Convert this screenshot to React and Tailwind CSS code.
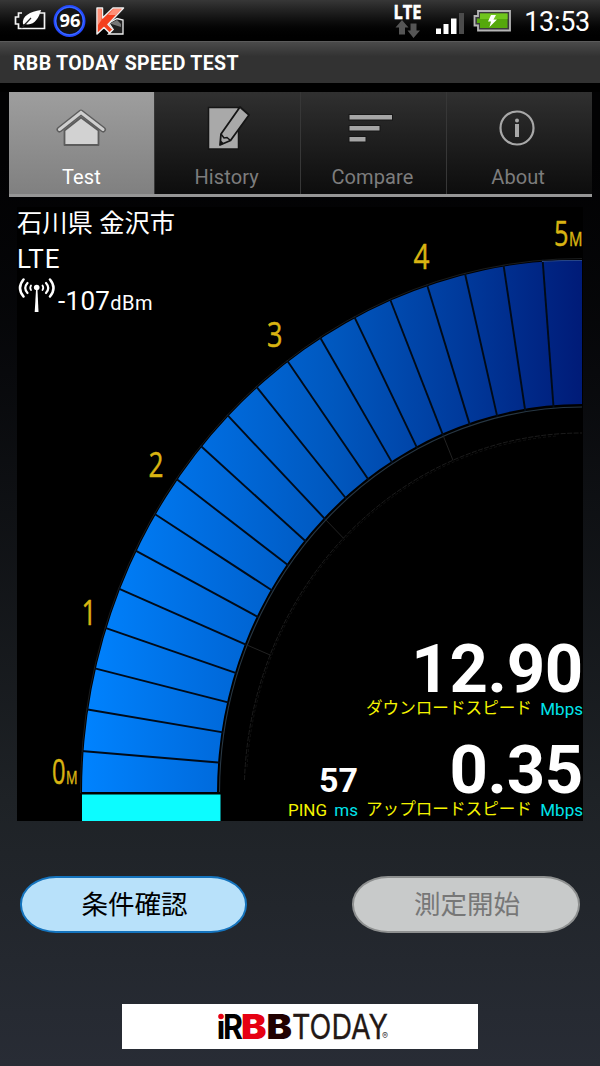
import React from "react";

const tabs = [
  { label: "Test", icon: HomeIcon, active: true },
  { label: "History", icon: HistoryIcon },
  { label: "Compare", icon: CompareIcon },
  { label: "About", icon: AboutIcon },
];

function HomeIcon() {
  return (
    <svg className="h-12 w-14" viewBox="0 0 56 48">
      <path d="M11.500 42V27.500L28 14.500L45.500 27.500V42Z" fill="#d2d2d2" stroke="#5c5c5c" strokeWidth="1.800" strokeLinejoin="round" />
      <path d="M6.500 26.500L28 9.500L50 26.500" fill="none" stroke="#5c5c5c" strokeWidth="6" strokeLinecap="round" strokeLinejoin="round" />
      <path d="M6.500 26.500L28 9.500L50 26.500" fill="none" stroke="#cfcfcf" strokeWidth="3" strokeLinecap="round" />
    </svg>
  );
}

function HistoryIcon() {
  return (
    <svg className="h-12 w-14" viewBox="0 0 56 48">
      <path d="M9.500 4.500H39.500V46H9.500Z" fill="#a9a9a9" stroke="#151515" strokeWidth="1.500" />
      <path d="M41 4L50 12L31.500 37.500L21 42L22 31Z" fill="#a9a9a9" stroke="#151515" strokeWidth="1.800" strokeLinejoin="round" />
      <path d="M22 31L25 35L28 34.500L31.500 37.500" fill="none" stroke="#151515" strokeWidth="1.500" />
      <path d="M21 42L22 37.500L25 40.500Z" fill="#151515" />
    </svg>
  );
}

function CompareIcon() {
  return (
    <svg className="h-12 w-14" viewBox="0 0 56 48">
      <g fill="#a5a5a5" stroke="#171717" strokeWidth="1">
        <rect x="5" y="11.500" width="43.500" height="5.500" />
        <rect x="5" y="22.500" width="31" height="5.500" />
        <rect x="5" y="33.500" width="17" height="5.500" />
      </g>
    </svg>
  );
}

function AboutIcon() {
  return (
    <svg className="h-12 w-14" viewBox="0 0 56 48">
      <circle cx="27" cy="25" r="16.500" fill="none" stroke="#a8a8a8" strokeWidth="2.200" />
      <circle cx="27" cy="17.500" r="2" fill="#a8a8a8" />
      <rect x="25" y="21" width="4" height="13" fill="#a8a8a8" />
    </svg>
  );
}

function StatusBar() {
  return (
    <header className="flex h-[41px] items-center bg-linear-to-b from-[#373737] to-black pr-[10px] pl-[13px] text-white">
      <svg className="h-[41px] w-[120px]" viewBox="13 0 120 41">
        <path d="M22 13H18.500V17H15.500V24H18.500V28.500H44.500V13H40" fill="none" stroke="#f4f4f4" strokeWidth="1.700" />
        <path d="M23 24.500C21.500 16 30 11.500 41 10C39 18 34 26.500 24.500 24Z" fill="#fff" />
        <path d="M21.500 28L31 18" stroke="#222" strokeWidth="1.200" />
        <circle cx="69.500" cy="21" r="14.500" fill="#151515" stroke="#2448ff" strokeWidth="3" />
        <circle cx="69.500" cy="21" r="14" fill="none" stroke="#3f74ff" strokeWidth="1" />
        <text x="59.500" y="27" textLength="21" lengthAdjust="spacingAndGlyphs" fill="#fff" fontSize="17.500" fontWeight="700" fontFamily="Noto Sans">96</text>
        <path d="M109 23L117 18.500L123 20V34H108.500L113 29.500Z" fill="#1f1f1f" stroke="#eee" strokeWidth="1.300" />
        <path d="M110 23.500L117 20L121 24V27Z" fill="#777" />
        <path d="M97 8H102.500V18L113 8H123.500L108 24.500L113 29.500L109.500 33L104 27.500L97 34Z" fill="#f4401e" stroke="#eee" strokeWidth="1.500" strokeLinejoin="round" />
        <path d="M98 9H101.500V20L98 25ZM113.500 9H121.500L116 15H108Z" fill="#ff9078" />
      </svg>
      <svg className="ml-auto h-[41px] w-[124px]" viewBox="390 0 124 41">
        <text x="393.500" y="18.500" textLength="28" lengthAdjust="spacingAndGlyphs" fill="#fff" stroke="#fff" strokeWidth="0.500" fontSize="19" fontWeight="700" fontFamily="Open Sans">LTE</text>
        <path d="M402 20L408.500 27.500H405V34.500H399V27.500H395.500Z" fill="#555" />
        <path d="M413.500 38L407.500 30.500H410.500V23.500H416.500V30.500H420Z" fill="#555" />
        <g fill="#fff">
          <rect x="436" y="28.500" width="5" height="5.500" />
          <rect x="443.500" y="24" width="5" height="10" />
          <rect x="451" y="18.500" width="5.500" height="15.500" />
          <rect x="459" y="13" width="5" height="21" fill="#4b4b4b" />
        </g>
        <path d="M478 11H510V30.500H478V25.500H474.500V16H478Z" fill="#3b3b3b" stroke="#b5b5b5" strokeWidth="1.800" />
        <path d="M480 13.500H507.500V28H480V23H477V18.500H480Z" fill="#55a80b" />
        <path d="M480 13.500H507.500V19H480Z" fill="#70c51d" />
        <path d="M491 15H496L493.500 19.500H497L489.500 27L491 21.500H488Z" fill="#fff" />
      </svg>
      <span className="ml-[10px] w-[66px] pt-[3px] text-right text-[27px] leading-[41px] tracking-[-0.3px] whitespace-nowrap">13:53</span>
    </header>
  );
}

// quarter ellipse, angles counted from the left end
const CX = 565;
const CY = 586;
function point(rx, ry, deg) {
  const a = (deg * Math.PI) / 180;
  return [CX - rx * Math.cos(a), CY - ry * Math.sin(a)];
}

function Gauge() {
  const dividers = Array.from({ length: 19 }, (_, i) => (i + 1) * 4.5);
  return (
    <svg className="col-start-1 row-start-1 h-[614px] w-[566px]" viewBox="0 0 566 614">
      <defs>
        <linearGradient id="ring" gradientUnits="userSpaceOnUse" x1="65" y1="0" x2="565" y2="0">
          <stop offset="0" stopColor="#0083ff" />
          <stop offset="0.270" stopColor="#006bdd" />
          <stop offset="0.500" stopColor="#0058bf" />
          <stop offset="0.750" stopColor="#003b9d" />
          <stop offset="1" stopColor="#001b78" />
        </linearGradient>
      </defs>
      <path d="M65 586A500 533 0 0 1 565 53V197A365 389 0 0 0 200 586Z" fill="url(#ring)" />
      {dividers.map((deg) => {
        const [x1, y1] = point(502, 535, deg);
        const [x2, y2] = point(362, 386, deg);
        return <line key={deg} x1={x1} y1={y1} x2={x2} y2={y2} stroke="#000b18" strokeWidth="1.900" />;
      })}
      <g fill="none">
        <path d="M63.500 586A501.500 534.500 0 0 1 565 51.500" stroke="#25282a" strokeWidth="0.700" />
        <path d="M525 54.500A500 533 0 0 1 565 53.500" stroke="#28478a" strokeWidth="1" />
        <path d="M202.500 586A362.500 386 0 0 1 565 200" stroke="#273744" strokeWidth="1.100" />
        <path d="M227.500 573A337.500 360 0 0 1 565 226" stroke="#232323" strokeWidth="0.800" strokeDasharray="5 1.500" />
        <path d="M230 560A335 357 0 0 1 540 229" stroke="#181818" strokeWidth="0.700" strokeDasharray="3 2" />
        {[22.5, 45, 67.5].map((deg) => {
          const [x1, y1] = point(362, 386, deg);
          const [x2, y2] = point(337, 360, deg);
          return <line key={deg} x1={x1} y1={y1} x2={x2} y2={y2} stroke="#222" strokeWidth="1" />;
        })}
      </g>
      <rect x="65" y="585" width="138" height="2.500" fill="#000" />
      <rect x="65" y="587.500" width="138.500" height="26.500" fill="#0cfcff" />
      <g fill="#d9b412" stroke="#d9b412" strokeWidth="0.500" fontFamily="Open Sans" fontSize="35">
        <text x="35" y="576.500" textLength="13.500" lengthAdjust="spacingAndGlyphs">0</text>
        <text x="49" y="576.500" fontSize="19" textLength="11.500" lengthAdjust="spacingAndGlyphs">M</text>
        <text x="64.500" y="418" textLength="15" lengthAdjust="spacingAndGlyphs">1</text>
        <text x="131.500" y="269.500" textLength="15" lengthAdjust="spacingAndGlyphs">2</text>
        <text x="250" y="140" textLength="15.500" lengthAdjust="spacingAndGlyphs">3</text>
        <text x="396.500" y="61.500" textLength="16" lengthAdjust="spacingAndGlyphs">4</text>
        <text x="537" y="39" textLength="14.500" lengthAdjust="spacingAndGlyphs">5</text>
        <text x="552" y="39" fontSize="20" textLength="13.500" lengthAdjust="spacingAndGlyphs">M</text>
      </g>
    </svg>
  );
}

function Antenna() {
  return (
    <svg className="h-9 w-[41px]" viewBox="0 0 41 36" fill="none" stroke="#fff" strokeLinecap="round">
      <path d="M19 13L17.700 35H21.500L20.500 13Z" fill="#fff" stroke="none" />
      <circle cx="19.700" cy="10.500" r="2.800" fill="#fff" stroke="none" />
      <path d="M6.500 2.500Q-0.500 11 6.500 19.500M33 2.500Q40 11 33 19.500" strokeWidth="2.500" />
      <path d="M10.500 6Q6 11 10.500 16M29 6Q33.500 11 29 16" strokeWidth="2.200" />
      <path d="M14 8.500Q12.500 11 14 13M25.500 8.500Q27 11 25.500 13" strokeWidth="1.800" />
    </svg>
  );
}

function Speed({ value, label }) {
  return (
    <div className="flex w-[217px] flex-col items-end">
      <span className="h-[67px] text-[67px] leading-[78px] font-bold tracking-[-0.3px] text-white">{value}</span>
      <div className="flex w-full items-center justify-between leading-6 whitespace-nowrap">
        <span className="text-[16.6px] text-[#f4f400]">{label}</span>
        <span className="text-[17px] text-[#00e4ea]">Mbps</span>
      </div>
    </div>
  );
}

function Logo() {
  return (
    <svg className="h-[45px] w-[355px]" viewBox="0 0 355 45" fontFamily="Inter">
      <text x="95.500" y="35" fontSize="33" fontWeight="900" textLength="7" lengthAdjust="spacingAndGlyphs" fill="#000">ı</text>
      <text x="101" y="35" fontSize="33.500" fontWeight="700" textLength="20" lengthAdjust="spacingAndGlyphs" fill="#000">R</text>
      <circle cx="99" cy="12.500" r="2.800" fill="#e60012" />
      <text x="119" y="35" fontSize="33.500" fontWeight="900" textLength="25.500" lengthAdjust="spacingAndGlyphs" fill="#e60012">B</text>
      <text x="144.500" y="35" fontSize="33.500" fontWeight="900" textLength="25.500" lengthAdjust="spacingAndGlyphs" fill="#210000">B</text>
      <text x="170" y="35" fontSize="33.500" fontWeight="400" textLength="96" lengthAdjust="spacingAndGlyphs" fill="#231815" stroke="#231815" strokeWidth="0.300">TODAY</text>
      <text x="260" y="34.500" fontSize="9" fill="#444">®</text>
    </svg>
  );
}

export default function App() {
  return (
    <div className="flex h-[1066px] w-[600px] flex-col overflow-hidden bg-linear-to-b from-[#020203] from-15% via-[#1e2226] via-75% to-[#282c35] font-['Roboto','Noto_Sans_CJK_JP',sans-serif]">
      <StatusBar />
      <div className="flex h-[42px] items-center border-t border-[#5b5b5b] bg-linear-to-b from-[#4b4b4b] to-[#323232] to-35% pt-[3px] pl-[13px] text-[19.5px] font-bold tracking-[0.35px] text-white">
        RBB TODAY SPEED TEST
      </div>

      <div className="h-[9px] bg-black" />
      <nav className="mr-[8.500px] ml-[8.500px] grid h-[105px] grid-cols-4 border-b-3 border-[#969696]">
        {tabs.map(({ label, icon: Icon, active }) => (
          <div
            key={label}
            className={
              active
                ? "flex flex-col items-center bg-linear-to-b from-[#9e9e9e] to-[#808080] pt-[11px] text-white"
                : "flex flex-col items-center border-l border-[#373737] bg-linear-to-b from-[#303030] to-[#0d0d0d] pt-[11px] pr-[2px] text-[#7d7d7d]"
            }
          >
            <Icon />
            <span className="mt-[14px] text-[20px] leading-6 tracking-[0.1px]">{label}</span>
          </div>
        ))}
      </nav>

      <main className="mt-[10px] ml-[17px] grid h-[614px] w-[566px] shrink-0 bg-black">
        <Gauge />
        <div className="z-10 col-start-1 row-start-1 flex flex-col justify-between text-white">
          <div>
            <div className="text-[25.3px] leading-[34px]">石川県 金沢市</div>
            <div className="text-[26px] leading-9 tracking-[0.8px]">LTE</div>
            <div className="flex">
              <Antenna />
              <div className="pt-[6px] text-[26px] leading-9 tracking-[0.3px]">
                -107<span className="text-[20px] tracking-[0.5px]">dBm</span>
              </div>
            </div>
          </div>
          <div className="-mb-px flex flex-col items-end gap-[10px]">
            <Speed value="12.90" label="ダウンロードスピード" />
            <div className="flex items-end gap-2">
              <div className="flex w-[70px] flex-col items-end">
                <span className="text-[34px] leading-9 font-bold">57</span>
                <div className="flex w-full justify-between text-[17px] leading-6">
                  <span className="text-[#f4f400]">PING</span>
                  <span className="text-[#00e4ea]">ms</span>
                </div>
              </div>
              <Speed value="0.35" label="アップロードスピード" />
            </div>
          </div>
        </div>
      </main>

      <div className="mx-5 mt-[55px] flex shrink-0 justify-between text-[26.5px]">
        <button className="h-[57px] w-[227px] rounded-[36px/28px] border-2 border-[#1473bd] bg-[#b8e1fa] pt-px pl-0.5 text-black">条件確認</button>
        <button className="h-[57px] w-[228px] rounded-[36px/28px] border-2 border-[#8e9090] bg-[#c8caca] pt-px pl-0.5 text-[#777]">測定開始</button>
      </div>

      <div className="mx-auto mt-[71px] h-[45px] w-[356px] shrink-0 bg-white">
        <Logo />
      </div>
    </div>
  );
}
